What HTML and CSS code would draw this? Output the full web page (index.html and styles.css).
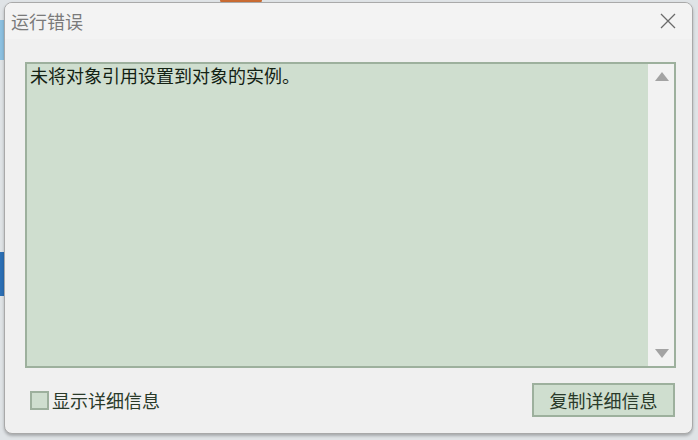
FILE: index.html
```html
<!DOCTYPE html>
<html lang="zh">
<head>
<meta charset="utf-8">
<link rel="stylesheet" href="styles.css">
</head>
<body>
<div class="desk">
  <div class="deco deco-orange"></div>
  <div class="deco deco-blue1"></div>
  <div class="deco deco-blue2"></div>
  <div class="window">
    <div class="titlebar">
      <span class="title">运行错误</span>
      <svg class="close" width="16" height="16" viewBox="0 0 16 16"><path d="M1 1 L15 15 M15 1 L1 15" stroke="#6a6a6a" stroke-width="1.3" fill="none"/></svg>
    </div>
    <div class="content">
      <div class="textbox">
        <div class="message">未将对象引用设置到对象的实例。</div>
        <div class="scrollbar">
          <svg width="14" height="9" viewBox="0 0 14 9"><path d="M7 0 L14 9 L0 9 Z" fill="#a3a3a3"/></svg>
          <svg width="14" height="9" viewBox="0 0 14 9"><path d="M0 0 L14 0 L7 9 Z" fill="#a3a3a3"/></svg>
        </div>
      </div>
      <div class="footer">
        <label class="check"><span class="box"></span>显示详细信息</label>
        <button class="btn">复制详细信息</button>
      </div>
    </div>
  </div>
</div>
</body>
</html>
```
FILE: styles.css
```css
* { box-sizing: border-box; }
html, body { margin: 0; padding: 0; }
body {
  width: 698px;
  height: 440px;
  overflow: hidden;
  background: #dfe3e6;
  font-family: "Noto Sans CJK SC", "Microsoft YaHei", sans-serif;
}
.desk {
  position: relative;
  width: 698px;
  height: 440px;
  padding: 2px 5px 6px 4px;
}
.deco { position: absolute; }
.deco-orange { left: 220px; top: 0; width: 42px; height: 3px; background: #c96b32; border-radius: 0 0 6px 6px; }
.deco-blue1 { left: 0; top: 20px; width: 6px; height: 40px; background: #8cc0e0; }
.deco-blue2 { left: 0; top: 252px; width: 6px; height: 44px; background: #2c6fb5; }
.window {
  position: relative;
  width: 689px;
  height: 432px;
  background: #f0f0f0;
  border: 1px solid #a9a9a9;
  border-radius: 8px;
  box-shadow: 0 2px 3px rgba(0,0,0,0.25);
  display: flex;
  flex-direction: column;
  overflow: hidden;
}
.titlebar {
  height: 36px;
  background: #f3f3f3;
  display: flex;
  align-items: center;
  justify-content: space-between;
  padding: 0 16px 0 6px;
  flex: none;
}
.title {
  font-size: 18px;
  color: #7a7a7a;
  line-height: 1;
}
.close { display: block; }
.content {
  flex: 1;
  display: flex;
  flex-direction: column;
  padding: 23px 16px 0 20px;
}
.textbox {
  height: 306px;
  background: #cfdecf;
  border: 2px solid #9db09d;
  display: flex;
}
.message {
  flex: 1;
  font-size: 18px;
  line-height: 20px;
  color: #142214;
  padding: 1px 0 0 3px;
}
.scrollbar {
  width: 26px;
  background: #f2f2f2;
  display: flex;
  flex-direction: column;
  justify-content: space-between;
  align-items: center;
  padding: 8px 0 8px 1px;
}
.scrollbar svg { display: block; }
.footer {
  display: flex;
  justify-content: space-between;
  align-items: center;
  margin-top: 15px;
  padding-right: 1px;
}
.check {
  display: flex;
  align-items: center;
  font-size: 18px;
  color: #2a3a2a;
  margin-left: 5px;
}
.box {
  width: 19px;
  height: 19px;
  background: #cfdecf;
  border: 2px solid #9db09d;
  margin-right: 3px;
}
.btn {
  width: 143px;
  height: 34px;
  background: #cfdecf;
  border: 2px solid #9db09d;
  font-family: inherit;
  font-size: 18px;
  color: #2a3a2a;
  padding: 0;
  border-radius: 0;
}
```
